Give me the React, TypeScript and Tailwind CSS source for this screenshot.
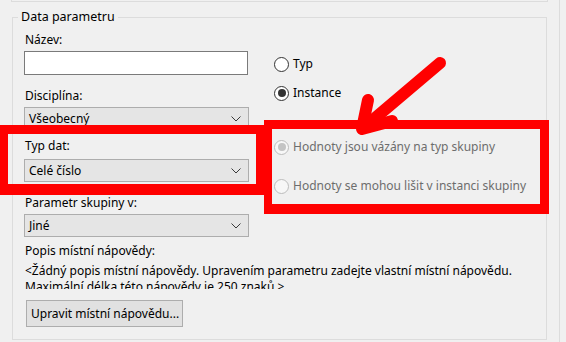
import type { ReactNode } from "react";

const font = { fontFamily: '"Noto Sans", "Liberation Sans", sans-serif' };

function Chevron() {
  return (
    <svg width="10" height="6" viewBox="0 0 10 6" className="shrink-0">
      <polyline points="0.5,0.5 5,5 9.5,0.5" fill="none" stroke="#3a3a3a" strokeWidth="1" />
    </svg>
  );
}

function Combo({ value, className = "" }: { value: string; className?: string }) {
  return (
    <div className={`h-[23px] w-[225px] border border-[#adadad] bg-[#e5e5e5] flex items-center justify-between pl-[4px] pr-[7px] text-black ${className}`}>
      <span>{value}</span>
      <Chevron />
    </div>
  );
}

function Label({ children, className = "" }: { children: ReactNode; className?: string }) {
  return <div className={`h-4 leading-4 pl-px text-black whitespace-nowrap ${className}`}>{children}</div>;
}

function Radio({ label, checked, disabled, className = "" }: { label: string; checked?: boolean; disabled?: boolean; className?: string }) {
  return (
    <div className={`h-4 flex items-center gap-[4px] whitespace-nowrap ${className}`}>
      <span
        className={`w-[15px] h-[15px] rounded-full border flex items-center justify-center ${
          disabled ? "border-[#bcbcbc] bg-[#f7f7f7]" : "border-[#333] bg-white"
        }`}
      >
        {checked && <span className={`w-[8px] h-[8px] rounded-full ${disabled ? "bg-[#c4c4c4]" : "bg-[#333]"}`} />}
      </span>
      <span className={`leading-4 ${disabled ? "text-[#6d6d6d]" : "text-black"}`}>{label}</span>
    </div>
  );
}

export default function App() {
  return (
    <div className="relative w-[566px] h-[342px] bg-[#f0f0f0] overflow-hidden text-[12px]" style={font}>
      <div className="flex h-full">
        <div className="w-[559px] shrink-0 flex flex-col">
          {/* bottom edge of the group above */}
          <div className="ml-[11px] w-[537px] h-[2px] border-l border-r border-b border-[#dcdcdc]" />

          {/* group box */}
          <div className="relative ml-[12px] mt-[15px] w-[535px] h-[323px] border border-[#dcdcdc] pl-[11px]">
            <span className="absolute left-[5px] -top-[9px] px-[3px] bg-[#f0f0f0] leading-4 text-[12.5px] text-black">Data parametru</span>

            <div className="flex gap-[25px]">
              <div className="w-[225px] flex flex-col">
                <Label className="mt-[14px]">Název:</Label>
                <div className="mt-[3px] h-[24px] w-[224px] border border-[#7a7a7a] bg-white" />
                <Label className="mt-[13px]">Disciplína:</Label>
                <Combo value="Všeobecný" className="mt-[3px]" />
                <Label className="mt-[8px]">Typ dat:</Label>
                <Combo value="Celé číslo" className="mt-[5px]" />
                <Label className="mt-[13px]">Parametr skupiny v:</Label>
                <Combo value="Jiné" className="mt-[3px]" />
              </div>

              <div className="flex flex-col">
                <Radio label="Typ" className="mt-[38px]" />
                <Radio label="Instance" checked className="mt-[13px]" />
                <Radio label="Hodnoty jsou vázány na typ skupiny" checked disabled className="mt-[38px]" />
                <Radio label="Hodnoty se mohou lišit v instanci skupiny" disabled className="mt-[23px]" />
              </div>
            </div>

            <Label className="mt-[6px]">Popis místní nápovědy:</Label>
            <div className="mt-[4px] h-[26px] overflow-hidden leading-4 pl-px w-[512px] text-black">
              &lt;Žádný popis místní nápovědy. Upravením parametru zadejte vlastní místní nápovědu. Maximální délka této nápovědy je 250 znaků.&gt;
            </div>
            <button className="mt-[11px] ml-[2px] h-[27px] w-[157px] border border-[#adadad] bg-[#e1e1e1] text-black text-left pl-[4px] leading-4 whitespace-nowrap">
              Upravit místní nápovědu...
            </button>
          </div>
        </div>
        <div className="flex-1 border-l border-[#dcdcdc]" />
      </div>

      {/* red highlight annotations */}
      <div className="absolute left-0 top-[125px] w-[264px] h-[70px] border-[#ff0000] border-t-[9px] border-l-[8px] border-r-[8px] border-b-[11px]" />
      <div className="absolute left-[264px] top-[120px] w-[285px] h-[94px] border-[#ff0000] border-t-[9px] border-l-[8px] border-r-[9px] border-b-[10px]" />
      <svg className="absolute left-0 top-0 pointer-events-none" width="566" height="342">
        <g stroke="#ff0000" strokeWidth="12" strokeLinecap="round" strokeLinejoin="round" fill="none">
          <line x1="440" y1="63" x2="368" y2="124" />
          <polyline points="368,100 362,129 392,121" />
        </g>
      </svg>
    </div>
  );
}
